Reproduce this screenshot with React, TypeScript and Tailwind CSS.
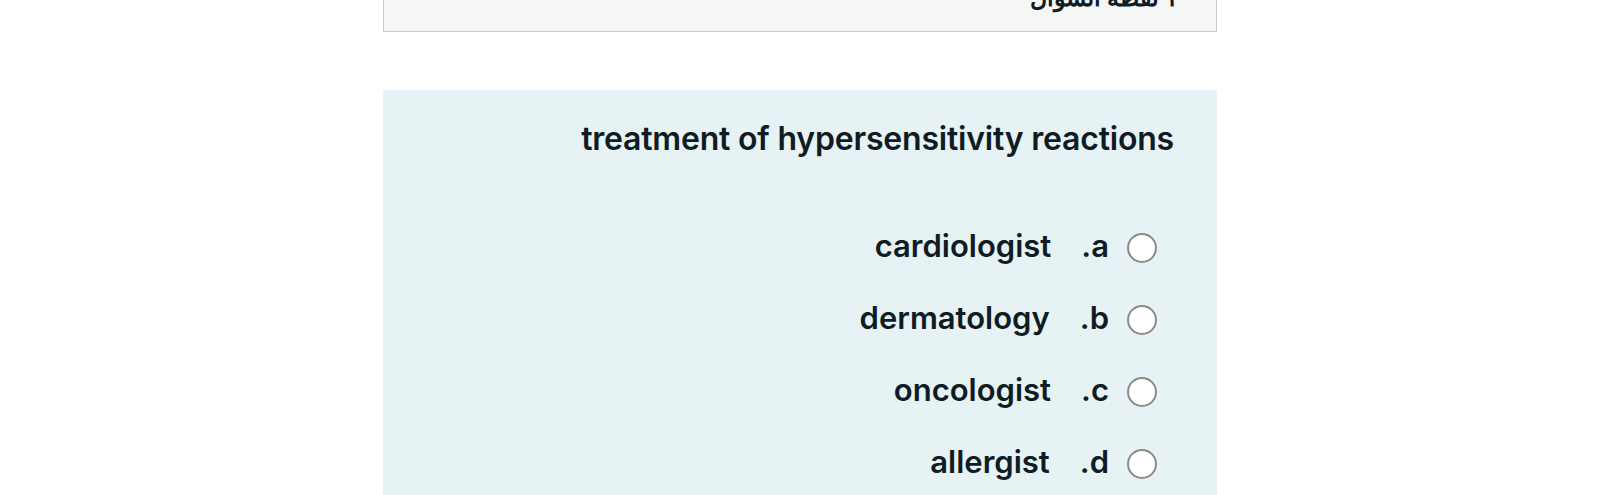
import React from 'react';

const options = [
  { key: 'a', text: 'cardiologist' },
  { key: 'b', text: 'dermatology' },
  { key: 'c', text: 'oncologist' },
  { key: 'd', text: 'allergist' },
];

const App: React.FC = () => {
  return (
    <div className="min-h-screen bg-white font-['Inter','Noto_Sans',sans-serif] text-[#0f1c24]">
      <div className="w-[834px] mx-auto">
        {/* Previous question box, mostly scrolled away */}
        <div
          dir="rtl"
          className="-mt-[40px] h-[72px] bg-[#f5f6f6] border-[1.5px] border-[#c9cacd] px-[38px] pt-[23px] text-[24px] font-semibold leading-[28px]"
        >
          ١ نقطة السؤال
        </div>

        {/* Current question */}
        <div dir="rtl" className="mt-[58px] bg-[#e6f2f4] pt-[30px] pr-[43px] pb-[40px]">
          <h2 className="text-[32px] font-semibold leading-[38px] tracking-[-0.2px]">
            treatment of hypersensitivity reactions
          </h2>

          <div className="mt-[70px] pr-[17px] flex flex-col gap-[36px]">
            {options.map((o) => (
              <label key={o.key} className="flex items-center h-[36px] text-[31px] font-semibold">
                <span className="w-[30px] h-[30px] rounded-full border-2 border-[#8a8a8a] bg-white shrink-0 mt-[4px]" />
                <span className="mr-[18px]">{o.key}.</span>
                <span className="mr-[30px]">{o.text}</span>
              </label>
            ))}
          </div>
        </div>
      </div>
    </div>
  );
};

export default App;
